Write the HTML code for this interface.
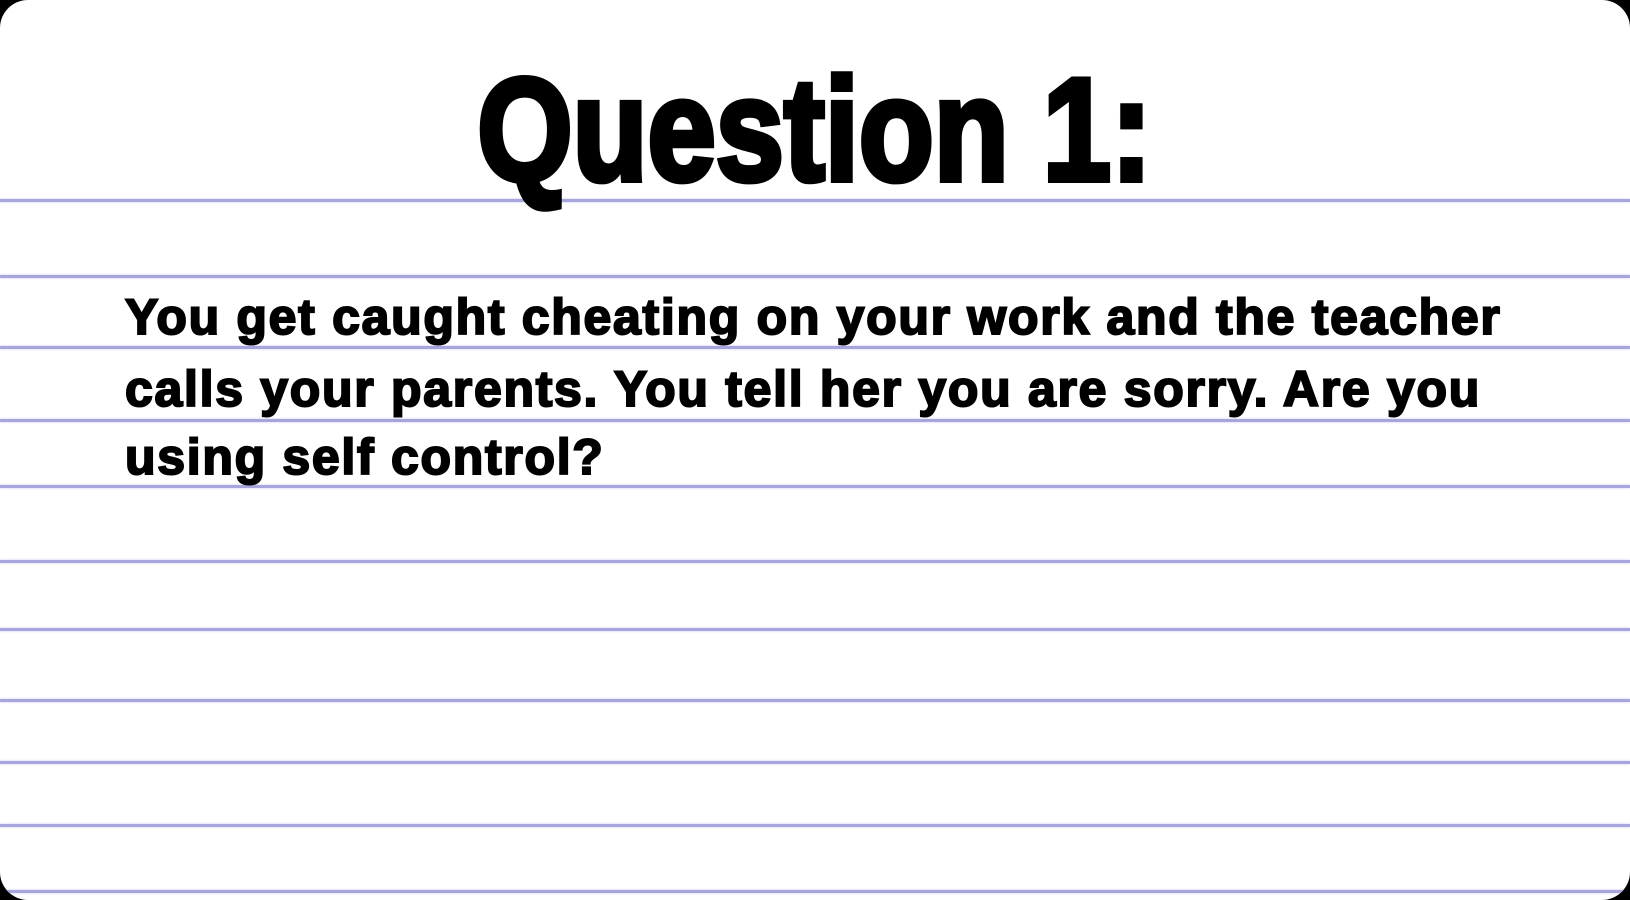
<!DOCTYPE html>
<html><head><style>
html,body{margin:0;padding:0;background:#000;}
.card{position:absolute;left:0;top:0;width:1630px;height:900px;background:#fff;border-radius:28px;overflow:hidden;}
.line{position:absolute;left:0;width:1630px;height:3px;background:#a6a6dc;box-shadow:0 0 2px #c8c8ee;}
.title{position:absolute;left:0;width:1630px;top:50px;text-align:center;font-family:"Liberation Sans",sans-serif;font-weight:bold;font-size:146px;line-height:160px;color:#000;-webkit-text-stroke:6px #000;}
.title span{display:inline-block;transform:scaleX(.84);text-shadow:0 0 4px #bbb;}
.txt{position:absolute;left:125px;font-family:"Liberation Sans",sans-serif;font-weight:bold;font-size:50px;letter-spacing:1.7px;color:#000;-webkit-text-stroke:2px #000;white-space:nowrap;line-height:1;}
</style></head><body>
<div class="card">
<div class="line" style="top:199px"></div>
<div class="line" style="top:275px"></div>
<div class="line" style="top:346px"></div>
<div class="line" style="top:419px"></div>
<div class="line" style="top:485px"></div>
<div class="line" style="top:560px"></div>
<div class="line" style="top:628px"></div>
<div class="line" style="top:699px"></div>
<div class="line" style="top:761px"></div>
<div class="line" style="top:824px"></div>
<div class="line" style="top:890px"></div>
<div class="title"><span>Question 1:</span></div>
<div class="txt" style="top:292px">You get caught cheating on your work and the teacher</div>
<div class="txt" style="top:364px">calls your parents. You tell her you are sorry. Are you</div>
<div class="txt" style="top:432px">using self control?</div>
</div>
</body></html>
